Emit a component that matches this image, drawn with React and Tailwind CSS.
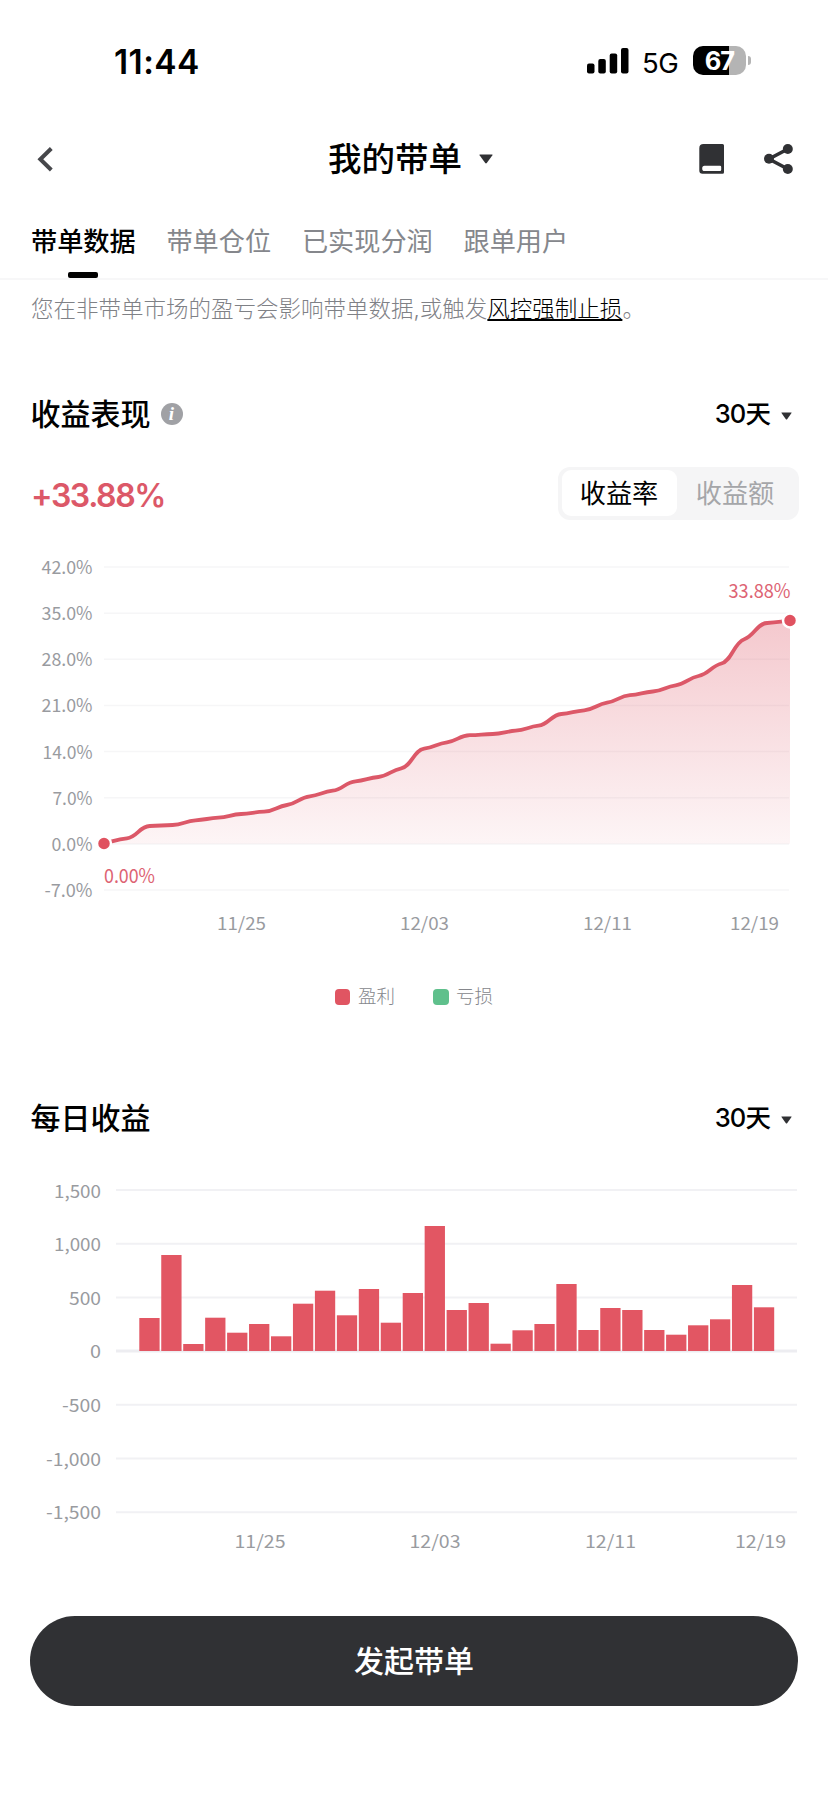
import React from 'react'
import { useState } from 'react'

const tabs = ['带单数据', '带单仓位', '已实现分润', '跟单用户']

// pixel heights of the cumulative curve, one point per day
const curve = [
    843.5, 838.3, 826, 825, 820.3, 817.7, 814, 811.7, 805, 796.3, 790.7,
    781.3, 777, 768.3, 748.7, 742.3, 735.2, 734, 730.7, 725.7, 714,
    710.3, 702.7, 695.2, 691.5, 685.3, 676, 663.5, 639.3, 623, 620.7,
]

const bars = [
    33, 96, 7, 33.3, 18.3, 27, 14.7, 47.3, 60.3, 35.7, 62, 28.3, 58, 125, 41,
    48, 7.3, 20.7, 27, 67, 21, 43, 41, 21, 16.3, 25.7, 31.7, 66, 43.7,
]

const LEFT = 104
const STEP = 22.867

const buildPath = () => {
    const secant = (i) => (curve[i + 1] - curve[i]) / STEP
    const slope = curve.map((_, i) => {
        if (i === 0) return secant(0)
        if (i === curve.length - 1) return secant(i - 1)
        return Math.max(secant(i - 1), secant(i)) * 0.5
    })
    let d = `M${LEFT} ${curve[0]}`
    for (let i = 0; i < curve.length - 1; i++) {
        const x = LEFT + i * STEP
        const k = STEP * 0.45
        d += ` C${x + k} ${curve[i] + slope[i] * k} ${x + STEP - k} ${curve[i + 1] - slope[i + 1] * k} ${x + STEP} ${curve[i + 1]}`
    }
    return d
}

const Caret = ({ className }) => (
    <svg viewBox="0 0 14 10" className={className} fill="#303134">
        <path d="M1 0.4h12q1 0 .4.9L7.8 9q-.8.9-1.6 0L.6 1.3Q0 .4 1 .4z" />
    </svg>
)

const StatusBar = () => (
    <div className="flex h-[122px] items-start pl-[114px] pr-[77px]">
        <div className="mt-[42px] text-[33.5px] leading-[41px] font-semibold tracking-[0.4px]">11:44</div>
        <svg viewBox="0 0 42 26" className="ml-auto mt-[48px] h-[26px] w-[42px]">
            <rect x="0" y="15.5" width="7.5" height="10" rx="2" />
            <rect x="11.3" y="11" width="7.5" height="14.5" rx="2" />
            <rect x="22.7" y="5.5" width="7.5" height="20" rx="2" />
            <rect x="34" y="0" width="7.5" height="25.5" rx="2" />
        </svg>
        <div className="ml-[13px] mt-[45px] w-[37px] text-[27.5px] leading-[36px] tracking-[-0.5px]">5G</div>
        <div className="ml-[14px] mt-[46px] flex items-center">
            <div className="flex h-[29px] w-[53px] items-center justify-center rounded-[10px] bg-[linear-gradient(90deg,#000_68%,#b4b4b4_68%)] text-[25.5px] leading-[29px] font-bold tracking-[-1px] text-white">67</div>
            <div className="ml-[2px] h-[9px] w-[3px] rounded-r-full bg-[#b4b4b4]"></div>
        </div>
    </div>
)

const Header = () => (
    <div className="flex h-[70px] items-center pl-[36px] pr-[34px]">
        <svg viewBox="0 0 18 26" className="mt-[3px] h-[26px] w-[18px]" fill="none" stroke="#46474b" strokeWidth="4">
            <path d="M15.3 2.5 4.3 13.2 15.3 24" />
        </svg>
        <h1 className="ml-[274px] mt-[3px] text-[33.5px] leading-[50px] font-medium">我的带单</h1>
        <Caret className="ml-[17px] mt-[4px] h-[10px] w-[14px]" />
        <svg viewBox="0 0 26 30" className="ml-auto mt-[4px] h-[30px] w-[26px]" fill="#303134">
            <path fillRule="evenodd" d="M4.5 0H23.5Q25 0 25 1.5V28.3Q25 29.8 23.5 29.8H3.5Q.3 29.8.3 26.5V4.2Q.3 0 4.5 0zM5.5 21.8Q3.2 21.8 3.2 24.4 3.2 27 5.5 27H21Q22.2 27 22.2 25.8V23Q22.2 21.8 21 21.8z" />
        </svg>
        <svg viewBox="0 0 29 30" className="ml-[39px] mr-[1px] mt-[4px] h-[30px] w-[29px]" fill="#303134">
            <path d="M23.8 5 5 15 23.8 25" fill="none" stroke="#303134" strokeWidth="3.6" />
            <circle cx="23.8" cy="5" r="5" />
            <circle cx="5" cy="14.8" r="5" />
            <circle cx="23.8" cy="25" r="5" />
        </svg>
    </div>
)

const SectionTitle = ({ title, info }) => (
    <div className="flex h-[60px] items-center pl-[30.5px] pr-[36px]">
        <h2 className="text-[30px] leading-[44px] font-medium">{title}</h2>
        {info && (
            <div className="ml-[10px] flex h-[22px] w-[22px] items-center justify-center rounded-full bg-[#a0a1a5] font-['Liberation_Serif',serif] text-[19px] leading-[22px] font-bold text-white italic">i</div>
        )}
        <button className="ml-auto flex items-center">
            <span className="text-[25.5px] leading-[36px] font-medium tracking-[-0.8px]">30</span>
            <span className="text-[25.5px] leading-[36px] font-medium">天</span>
            <Caret className="ml-[10px] mt-[4px] h-[8px] w-[11px]" />
        </button>
    </div>
)

const ProfitChart = () => {
    const path = buildPath()
    const labels = ['42.0%', '35.0%', '28.0%', '21.0%', '14.0%', '7.0%', '0.0%', '-7.0%']
    const widths = [51, 51, 51, 51, 50, 40, 41, 48]
    const dates = [['11/25', 218], ['12/03', 401], ['12/11', 584], ['12/19', 731]]

    return (
        <svg viewBox="0 540 828 400" className="mt-[17px] h-[400px] w-[828px] font-['Noto_Sans_CJK_SC',sans-serif] font-normal">
            <defs>
                <linearGradient id="profit" x1="0" y1="0" x2="0" y2="1">
                    <stop offset="0" stopColor="#dd5565" stopOpacity="0.32" />
                    <stop offset="1" stopColor="#dd5565" stopOpacity="0.06" />
                </linearGradient>
            </defs>
            {labels.map((label, i) => (
                <g key={label}>
                    <line x1="104" x2="789" y1={567 + i * 46.15} y2={567 + i * 46.15} stroke="#f6f6f7" strokeWidth="1.5" />
                    <text x={92.5 - widths[i]} y={574 + i * 46.15} textLength={widths[i]} lengthAdjust="spacingAndGlyphs" fontSize="18" fill="#999b9f">{label}</text>
                </g>
            ))}
            <path d={`${path} V843.7 H104 Z`} fill="url(#profit)" />
            <path d={path} fill="none" stroke="#dc5868" strokeWidth="3.8" />
            <circle cx="104" cy="843.5" r="7" fill="#e05260" stroke="#fff" strokeWidth="2.5" />
            <circle cx="790" cy="620.5" r="7" fill="#e05260" stroke="#fff" strokeWidth="2.5" />
            <text x="728.5" y="598" textLength="62" lengthAdjust="spacingAndGlyphs" fontSize="19.5" fill="#dd6373">33.88%</text>
            <text x="104" y="883" textLength="51" lengthAdjust="spacingAndGlyphs" fontSize="19.5" fill="#dd6373">0.00%</text>
            {dates.map(([date, x]) => (
                <text key={date} x={x - 1} y="930" textLength="49" lengthAdjust="spacingAndGlyphs" fontSize="17.5" fill="#999b9f">{date}</text>
            ))}
        </svg>
    )
}

const DailyChart = () => {
    const labels = ['1,500', '1,000', '500', '0', '-500', '-1,000', '-1,500']
    const widths = [47, 47, 32, 11, 39, 55, 55]
    const dates = [['11/25', 235.5], ['12/03', 410.5], ['12/11', 586], ['12/19', 736]]

    return (
        <svg viewBox="0 1160 828 400" className="mt-[12px] h-[400px] w-[828px] font-['Noto_Sans_CJK_SC',sans-serif] font-normal">
            {labels.map((label, i) => (
                <g key={label}>
                    <line x1="116" x2="797" y1={1190 + i * 53.7} y2={1190 + i * 53.7} stroke={label === '0' ? '#ededf1' : '#f1f1f4'} strokeWidth={label === '0' ? 3 : 2} />
                    <text x={101 - widths[i]} y={1197.5 + i * 53.6} textLength={widths[i]} lengthAdjust="spacingAndGlyphs" fontSize="18" fill="#999b9f">{label}</text>
                </g>
            ))}
            {bars.map((h, i) => (
                <rect key={i} x={139.3 + i * 21.95} y={1351 - h} width="20.3" height={h} fill="#e25663" />
            ))}
            {dates.map(([date, x]) => (
                <text key={date} x={x - 1} y="1548.3" textLength="51" lengthAdjust="spacingAndGlyphs" fontSize="17.5" fill="#999b9f">{date}</text>
            ))}
        </svg>
    )
}

const App = () => {
    const [active, setActive] = useState(0)

    return (
        <div className="h-[1800px] w-[828px] overflow-hidden bg-white font-['Inter','Noto_Sans_CJK_SC',sans-serif] text-black">
            <StatusBar />
            <Header />

            <nav className="flex h-[88px] gap-[30.7px] border-b-2 border-[#f7f7f8] pl-[31px] pt-[25.5px]">
                {tabs.map((tab, i) => (
                    <button key={tab} onClick={() => setActive(i)} className="flex flex-col items-center">
                        <span className={`text-[26.2px] leading-[48px] ${active === i ? 'font-medium' : 'font-normal text-[#85878c]'}`}>{tab}</span>
                        {active === i && <span className="mt-[6.5px] h-[6px] w-[30px] rounded-[2px] bg-black"></span>}
                    </button>
                ))}
            </nav>

            <p className="h-[57px] pl-[31px] text-[22.5px] leading-[57px] font-light text-[#7f8186]">
                您在非带单市场的盈亏会影响带单数据,或触发<span className="text-black underline decoration-[1.5px] underline-offset-[2px]">风控强制止损</span>。
            </p>

            <section className="mt-[47px]">
                <SectionTitle title="收益表现" info />
                <div className="mt-[19px] flex h-[60px] items-center justify-between pl-[31px] pr-[29px]">
                    <div className="mt-[6px] text-[32px] leading-[40px] font-semibold tracking-[-1.4px] text-[#dc5868]">+33.88%</div>
                    <div className="flex h-[53px] w-[241px] rounded-[12px] bg-[#f5f5f6] p-[3.5px] text-[26.2px] leading-[48px]">
                        <button className="w-[115px] rounded-[9px] bg-white">收益率</button>
                        <button className="flex-1 pr-[2px] text-[#a5a6a9]">收益额</button>
                    </div>
                </div>
                <ProfitChart />
                <div className="mt-[42px] flex h-[30px] items-center justify-center gap-[38px] text-[18.5px] font-light text-[#85878c]">
                    <div className="flex items-center gap-[7.5px]">
                        <span className="h-[15.5px] w-[15.5px] rounded-[4px] bg-[#e05562]"></span>盈利
                    </div>
                    <div className="flex items-center gap-[7.5px]">
                        <span className="h-[15.5px] w-[15.5px] rounded-[4px] bg-[#5fc08c]"></span>亏损
                    </div>
                </div>
            </section>

            <section className="mt-[76px]">
                <SectionTitle title="每日收益" />
                <DailyChart />
            </section>

            <button className="mx-[30px] mt-[55.5px] flex h-[90px] w-[768px] items-center justify-center rounded-full bg-[#303134] pt-[1px] text-[30px] font-medium text-white">发起带单</button>
        </div>
    )
}

export default App
